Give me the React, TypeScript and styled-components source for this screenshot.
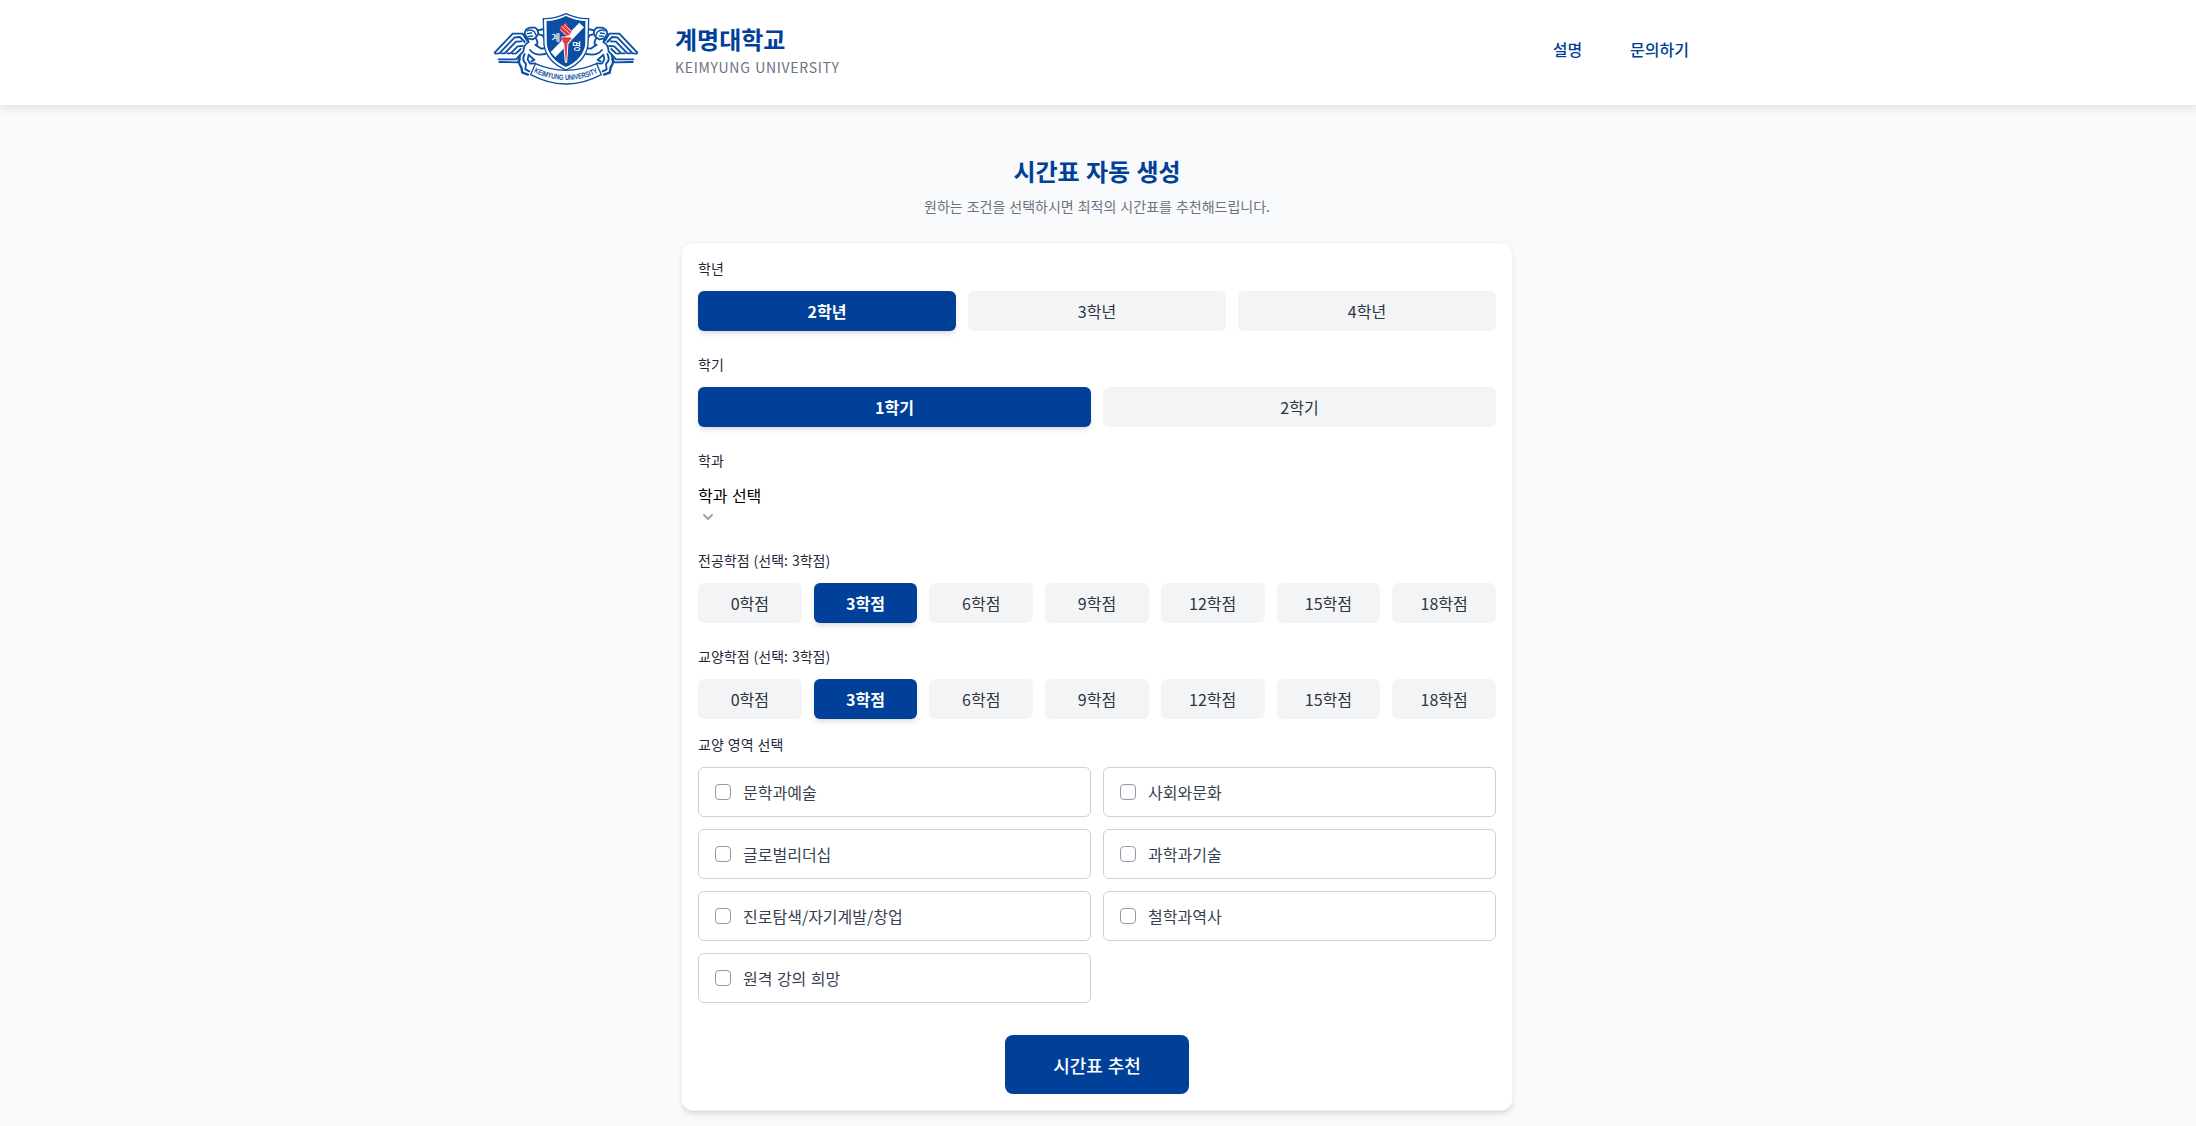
import React, { useState } from "react";
import styled, { createGlobalStyle, css } from "styled-components";

const BLUE = "#004098";

const GlobalStyle = createGlobalStyle`
  *, *::before, *::after { box-sizing: border-box; }
  html, body { margin: 0; }
  body {
    background: #f9fafb;
    color: #000;
    font-family: "Noto Sans CJK KR", "Noto Sans", sans-serif;
    font-size: 16px;
    line-height: 24px;
    word-spacing: 0.054em;
    overflow: hidden;
  }
  h1, h2, p { margin: 0; }
  button { font: inherit; word-spacing: inherit; border: 0; cursor: pointer; }
`;

const Page = styled.div`
  min-height: 1126px;
  background: #f9fafb;
`;

const Header = styled.header`
  height: 106px;
  padding-right: 2px;
  background: #fff;
  border-bottom: 1px solid #e5e7eb;
  box-shadow: 0 4px 8px rgba(0, 0, 0, 0.08);
`;

const HeaderInner = styled.div`
  width: 1210px;
  height: 100%;
  margin: 0 auto;
  display: flex;
  justify-content: space-between;
`;

const Brand = styled.div`
  display: flex;
  align-items: flex-start;
  padding-top: 10px;
  gap: 35px;
`;

const Emblem = styled.svg`
  display: block;
  width: 148px;
  height: 76px;
`;

const BrandText = styled.div`
  display: flex;
  flex-direction: column;
  padding-top: 13px;
`;

const BrandName = styled.h1`
  color: ${BLUE};
  font-size: 24px;
  line-height: 32px;
  font-weight: 700;
`;

const BrandSub = styled.p`
  color: #6b7280;
  font-size: 14px;
  line-height: 20px;
  letter-spacing: 0.7px;
  margin-top: 2px;
`;

const Nav = styled.nav`
  display: flex;
  align-items: center;
  gap: 48px;
  padding: 0 13px 7px 0;
`;

const NavLink = styled.a`
  color: ${BLUE};
  font-weight: 500;
  text-decoration: none;
`;

const Main = styled.main`
  display: flex;
  flex-direction: column;
  align-items: center;
  padding: 49px 2px 0 0;
`;

const Intro = styled.div`
  text-align: center;
`;

const Title = styled.h2`
  color: ${BLUE};
  font-size: 24px;
  line-height: 32px;
  font-weight: 700;
`;

const Subtitle = styled.p`
  margin-top: 9px;
  color: #6b7280;
  font-size: 14px;
  line-height: 20px;
`;

const Card = styled.form`
  width: 832px;
  margin-top: 26px;
  padding: 16px;
  display: flex;
  flex-direction: column;
  background: #fff;
  border: 1px solid #f3f4f6;
  border-radius: 12px;
  box-shadow: 0 4px 6px -1px rgba(0, 0, 0, 0.1), 0 2px 4px -2px rgba(0, 0, 0, 0.1);
`;

const Field = styled.section<{ $tight?: boolean }>`
  margin-bottom: ${(p) => (p.$tight ? 16 : 24)}px;
`;

const Label = styled.div`
  margin-bottom: 14px;
  color: #1f2937;
  font-size: 14px;
  line-height: 18px;
  font-weight: 400;
`;

const Options = styled.div<{ $cols: number }>`
  display: grid;
  grid-template-columns: repeat(${(p) => p.$cols}, minmax(0, 1fr));
  gap: 12px;
`;

const Option = styled.button<{ $active: boolean }>`
  height: 40px;
  padding: 0;
  border-radius: 6px;
  line-height: 24px;
  ${(p) =>
    p.$active
      ? css`
          background: ${BLUE};
          color: #fff;
          font-weight: 700;
          box-shadow: 0 4px 6px -1px rgba(0, 0, 0, 0.1), 0 2px 4px -2px rgba(0, 0, 0, 0.1);
        `
      : css`
          background: #f3f4f6;
          color: #2b3544;
          font-weight: 400;
        `}
`;

const Select = styled.button`
  display: flex;
  flex-direction: column;
  align-items: flex-start;
  padding: 0;
  background: none;
  color: #000;
  font-weight: 400;
  text-align: left;
`;

const Chevron = styled.svg`
  display: block;
  width: 20px;
  height: 20px;
  color: #9ca3af;
`;

const CheckItem = styled.label`
  display: flex;
  align-items: center;
  gap: 12px;
  height: 50px;
  padding: 0 16px;
  border: 1px solid #cdd0d8;
  border-radius: 6px;
  color: #374151;
`;

const CheckBox = styled.input`
  appearance: none;
  width: 16px;
  height: 16px;
  margin: 0;
  border: 1px solid #9498a8;
  border-radius: 4px;
  background: #fff;
  &:checked {
    background: ${BLUE};
  }
`;

const Submit = styled.button`
  align-self: center;
  width: 184px;
  height: 59px;
  margin-top: 32px;
  padding: 0;
  border-radius: 8px;
  background: ${BLUE};
  color: #fff;
  font-size: 18px;
  line-height: 28px;
  font-weight: 500;
`;

function Beast() {
  return (
    <g fill="none" stroke="#0a4fa3" strokeWidth="5.5" strokeLinejoin="round" strokeLinecap="round">
      <path d="M44 158 L98 101 L128 101 L141 122" />
      <path d="M46 161 L58 160 L104 112 L120 111 L134 126" />
      <path d="M64 160 L74 160 L108 125 L124 124" />
      <path d="M82 160 L92 160 L113 139 L128 138" />
      <path d="M98 161 L108 160 L122 147" />
      <path d="M56 178 L108 178 L130 154" />
      <path d="M58 186 L112 187 L120 178" />
      <path d="M134 103 Q134 86 150 83 L166 83 Q176 90 174 102 Q170 113 158 118 L143 115Z" fill="#fff" />
      <path d="M141 93 Q152 86 164 96 L168 106 M142 101 L155 99 M146 109 L158 108" strokeWidth="4" />
      <path d="M173 91 L192 87 M177 103 L188 106 L196 124" />
      <path d="M142 116 L146 126 Q130 136 131 150 M166 113 Q176 126 170 136" />
      <path d="M120 166 Q112 188 124 202 L127 218 L144 224" strokeWidth="7" />
      <path d="M134 162 Q124 180 138 192 L136 208 L148 214" />
      <path d="M146 164 L143 178 L150 191 L166 190 M148 166 L163 180 L154 184" />
      <path d="M150 150 Q162 164 180 164 L196 162" />
      <path d="M166 134 L184 146 L198 144" />
    </g>
  );
}

function Crest() {
  return (
    <Emblem viewBox="36 30 444 228" role="img" aria-label="계명대학교">
      <Beast />
      <g transform="translate(516 0) scale(-1 1)">
        <Beast />
      </g>
      <path
        d="M258 41 Q292 57 326 56 L324 134 Q317 185 258 210 Q199 185 192 134 L190 56 Q225 57 258 41Z"
        fill="#fff"
        stroke="#0a4fa3"
        strokeWidth="4"
      />
      <clipPath id="shield">
        <path d="M258 48 Q288 63 317 63 L316 132 Q309 178 258 201 Q207 178 200 132 L199 63 Q228 63 258 48Z" />
      </clipPath>
      <g clipPath="url(#shield)">
        <rect x="190" y="40" width="140" height="170" fill="#0a4fa3" />
        <path d="M212 156 L298 68 L312 82 L226 172Z" fill="#fff" />
      </g>
      <path
        d="M245 111 L271 111 L270 125 L264 129 L260 187 L256 187 L251 129 L246 125Z"
        fill="#e63946"
        stroke="#fff"
        strokeWidth="3"
      />
      <path d="M242 116 H274" stroke="#e63946" strokeWidth="6" />
      <path d="M258 65 Q253 76 241 80 L240 91 L257 107 L268 106 L276 92 L263 79Z" fill="#e63946" />
      <path d="M245 78 L269 101 M240 88 L258 106 M252 73 L274 94" stroke="#fff" strokeWidth="2.5" />
      <text x="227" y="124" fontSize="29" fontWeight="500" fill="#fff" textAnchor="middle">계</text>
      <text x="290" y="151" fontSize="30" fontWeight="500" fill="#fff" textAnchor="middle">명</text>
      <path
        d="M166 191 Q258 231 350 191 L364 224 Q309 253 258 252 Q207 253 152 224Z"
        fill="#fff"
        stroke="#0a4fa3"
        strokeWidth="4"
        strokeLinejoin="round"
      />
      <path id="motto" d="M161 217 Q258 263 357 217" fill="none" />
      <text fontSize="23" fontWeight="700" fill="#0a4fa3" fontFamily="Liberation Sans Narrow, Liberation Sans, sans-serif">
        <textPath href="#motto" textLength="200" lengthAdjust="spacingAndGlyphs">
          KEIMYUNG UNIVERSITY
        </textPath>
      </text>
    </Emblem>
  );
}

interface GroupProps {
  label: string;
  items: string[];
  value: string;
  onChange: (v: string) => void;
  tight?: boolean;
}

function OptionGroup({ label, items, value, onChange, tight }: GroupProps) {
  return (
    <Field $tight={tight}>
      <Label>{label}</Label>
      <Options $cols={items.length}>
        {items.map((item) => (
          <Option key={item} type="button" $active={item === value} onClick={() => onChange(item)}>
            {item}
          </Option>
        ))}
      </Options>
    </Field>
  );
}

const CREDITS = ["0학점", "3학점", "6학점", "9학점", "12학점", "15학점", "18학점"];
const AREAS = [
  "문학과예술",
  "사회와문화",
  "글로벌리더십",
  "과학과기술",
  "진로탐색/자기계발/창업",
  "철학과역사",
  "원격 강의 희망",
];

export default function App() {
  const [year, setYear] = useState("2학년");
  const [term, setTerm] = useState("1학기");
  const [major, setMajor] = useState("3학점");
  const [general, setGeneral] = useState("3학점");

  return (
    <Page>
      <GlobalStyle />
      <Header>
        <HeaderInner>
          <Brand>
            <Crest />
            <BrandText>
              <BrandName>계명대학교</BrandName>
              <BrandSub>KEIMYUNG UNIVERSITY</BrandSub>
            </BrandText>
          </Brand>
          <Nav>
            <NavLink>설명</NavLink>
            <NavLink>문의하기</NavLink>
          </Nav>
        </HeaderInner>
      </Header>
      <Main>
        <Intro>
          <Title>시간표 자동 생성</Title>
          <Subtitle>원하는 조건을 선택하시면 최적의 시간표를 추천해드립니다.</Subtitle>
        </Intro>
        <Card>
          <OptionGroup label="학년" items={["2학년", "3학년", "4학년"]} value={year} onChange={setYear} />
          <OptionGroup label="학기" items={["1학기", "2학기"]} value={term} onChange={setTerm} />
          <Field>
            <Label>학과</Label>
            <Select type="button">
              학과 선택
              <Chevron viewBox="0 0 20 20" fill="currentColor">
                <path
                  fillRule="evenodd"
                  clipRule="evenodd"
                  d="M5.293 7.293a1 1 0 011.414 0L10 10.586l3.293-3.293a1 1 0 111.414 1.414l-4 4a1 1 0 01-1.414 0l-4-4a1 1 0 010-1.414z"
                />
              </Chevron>
            </Select>
          </Field>
          <OptionGroup label={`전공학점 (선택: ${major})`} items={CREDITS} value={major} onChange={setMajor} />
          <OptionGroup label={`교양학점 (선택: ${general})`} items={CREDITS} value={general} onChange={setGeneral} tight />
          <Label>교양 영역 선택</Label>
          <Options $cols={2}>
            {AREAS.map((area) => (
              <CheckItem key={area}>
                <CheckBox type="checkbox" />
                {area}
              </CheckItem>
            ))}
          </Options>
          <Submit type="button">시간표 추천</Submit>
        </Card>
      </Main>
    </Page>
  );
}
